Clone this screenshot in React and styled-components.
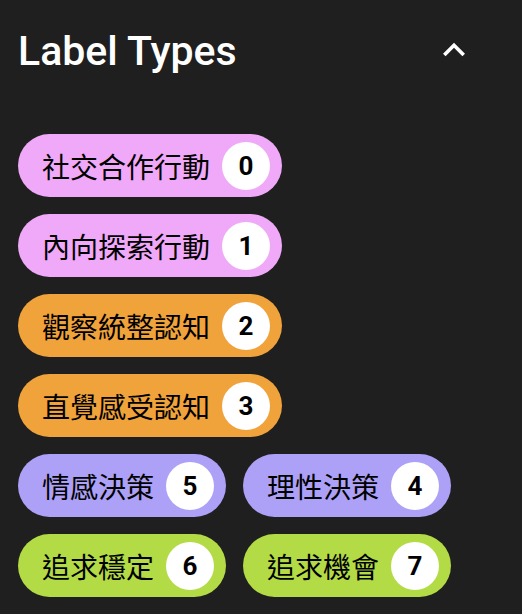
import React from "react";
import styled, { createGlobalStyle } from "styled-components";

const Global = createGlobalStyle`
  html, body { margin: 0; padding: 0; background: #1f1f1f; }
  body { font-family: Roboto, "Noto Sans CJK TC", sans-serif; }
`;

const Panel = styled.div`
  width: 522px;
  min-height: 614px;
  box-sizing: border-box;
  padding: 25px 46px 0 18px;
  background: #1f1f1f;
`;

const Header = styled.div`
  display: flex;
  align-items: center;
  justify-content: space-between;
  height: 50px;
`;

const Title = styled.h2`
  margin: 2px 0 0;
  font-family: Roboto, sans-serif;
  font-weight: 500;
  font-size: 41px;
  line-height: 48px;
  color: #ffffff;
`;

const Toggle = styled.button`
  border: 0;
  padding: 0;
  background: transparent;
  color: #ffffff;
  width: 44px;
  height: 44px;
  display: flex;
  align-items: center;
  justify-content: center;
  cursor: pointer;
  svg { width: 44px; height: 44px; display: block; }
`;

const Chips = styled.div`
  margin-top: 59px;
  display: flex;
  flex-direction: column;
  gap: 17px;
`;

const Row = styled.div`
  display: flex;
  gap: 17px;
`;

const Chip = styled.div`
  display: inline-flex;
  align-items: center;
  gap: 12px;
  height: 63px;
  box-sizing: border-box;
  padding: 0 12px 0 24px;
  border-radius: 32px;
  background: ${(p) => p.$color};
  color: #000;
`;

const Name = styled.span`
  font-family: "Noto Sans CJK TC", sans-serif;
  font-size: 28px;
  line-height: 1;
  white-space: nowrap;
`;

const Badge = styled.span`
  width: 48px;
  height: 48px;
  border-radius: 50%;
  background: #ffffff;
  display: flex;
  align-items: center;
  justify-content: center;
  font-family: Roboto, sans-serif;
  font-weight: 700;
  font-size: 26px;
  color: #000;
`;

const COLORS = {
  pink: "#f0a8f8",
  orange: "#f0a23b",
  purple: "#aca0f7",
  green: "#b3db45",
};

const rows = [
  [{ name: "社交合作行動", n: 0, c: "pink" }],
  [{ name: "內向探索行動", n: 1, c: "pink" }],
  [{ name: "觀察統整認知", n: 2, c: "orange" }],
  [{ name: "直覺感受認知", n: 3, c: "orange" }],
  [
    { name: "情感決策", n: 5, c: "purple" },
    { name: "理性決策", n: 4, c: "purple" },
  ],
  [
    { name: "追求穩定", n: 6, c: "green" },
    { name: "追求機會", n: 7, c: "green" },
  ],
];

export default function App() {
  return (
    <>
      <Global />
      <Panel>
        <Header>
          <Title>Label Types</Title>
          <Toggle aria-label="collapse">
            <svg viewBox="0 0 24 24" fill="currentColor">
              <path d="m12 8-6 6 1.41 1.41L12 10.83l4.59 4.58L18 14z" />
            </svg>
          </Toggle>
        </Header>
        <Chips>
          {rows.map((r, i) => (
            <Row key={i}>
              {r.map((it) => (
                <Chip key={it.n} $color={COLORS[it.c]}>
                  <Name>{it.name}</Name>
                  <Badge>{it.n}</Badge>
                </Chip>
              ))}
            </Row>
          ))}
        </Chips>
      </Panel>
    </>
  );
}
